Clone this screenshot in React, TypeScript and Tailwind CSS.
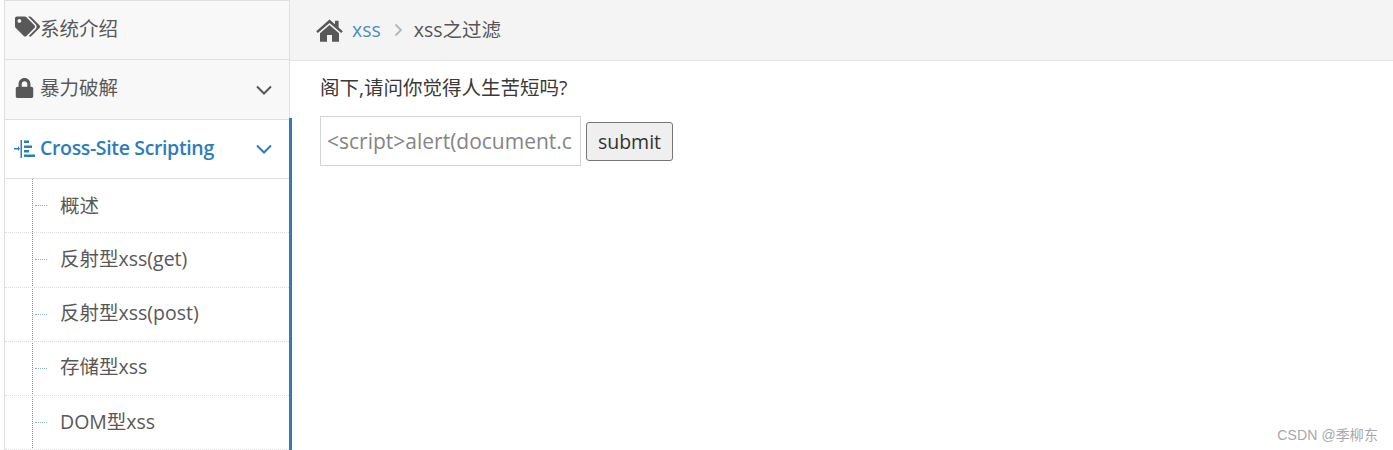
import React from "react";
import { FaTags, FaLock } from "react-icons/fa";

const font = "font-['Open_Sans','Noto_Sans_CJK_SC',sans-serif]";

function Chevron({ color }: { color: string }) {
  return (
    <svg width="18" height="12" viewBox="0 0 18 12" fill="none" className="shrink-0">
      <path d="M2 2.5 L9 9.5 L16 2.5" stroke={color} strokeWidth="2" />
    </svg>
  );
}

function HomeIcon() {
  return (
    <svg width="27" height="23" viewBox="0 0 27 23" className="shrink-0" fill="#585858">
      <path d="M0.2 12.2 L13.5 0.6 L19 5.2 L19 1.8 L22.6 1.8 L22.6 8.4 L26.8 12.2 L25.2 14 L13.5 4 L1.8 14 Z" />
      <path d="M4 14.2 L13.5 6 L23 14.2 L23 22.8 L16 22.8 L16 16 L11 16 L11 22.8 L4 22.8 Z" />
    </svg>
  );
}

function TreeIcon() {
  return (
    <svg width="22" height="18" viewBox="0 0 22 18" fill="#2b7dbc" className="shrink-0">
      <rect x="0" y="8" width="4" height="1.5" />
      <path d="M4 6 L6 8.7 L4 11 Z" />
      <rect x="6.5" y="0" width="1.5" height="18" />
      <rect x="10" y="0.5" width="5" height="2.5" />
      <rect x="10" y="5.5" width="8" height="2.5" />
      <rect x="10" y="10" width="5" height="2.5" />
      <rect x="10" y="14.5" width="11" height="2.5" />
    </svg>
  );
}

const subs = ["概述", "反射型xss(get)", "反射型xss(post)", "存储型xss", "DOM型xss"];
const heights = ["h-[54px]", "h-[55px]", "h-[54px]", "h-[54px]", "h-[54px]"];
const offsets = ["", "-mt-[3px]", "-mt-[3px]", "-mt-[3px]", "-mt-[1px]"];

export default function App() {
  return (
    <div className={`${font} flex h-[450px] w-[1393px] overflow-hidden bg-white text-[19.5px] text-[#585858] relative`}>
      <aside className="ml-1 w-[286px] shrink-0 flex flex-col">
        <div className="w-[286px] h-[60px] border border-[#e0e0e0] bg-[#f8f8f8] flex items-center pl-[10px] pb-[3px]">
          <FaTags className="w-[25px] h-[21px] text-[#585858] shrink-0 -mt-1" />
          <span>系统介绍</span>
        </div>
        <div className="w-[286px] h-[60px] border-x border-b border-[#e0e0e0] bg-[#f8f8f8] flex items-center pl-[11px] pr-[16px]">
          <FaLock className="w-[19px] h-[20px] text-[#585858] shrink-0 -mt-1 -ml-px" />
          <span className="ml-[6px] flex-1 -mt-[4px]">暴力破解</span>
          <Chevron color="#585858" />
        </div>
        <div className="w-[288px] relative z-10 border-r-[3px] border-[#2f7cb8] flex-1 flex flex-col -mt-[2px] pt-[2px]">
          <div className="h-[59px] border-l border-b border-[#e0e0e0] flex items-center pl-[9px] pr-[16px] text-[#2b7dbc] font-semibold bg-white">
            <TreeIcon />
            <span className="ml-[4px] flex-1 whitespace-nowrap tracking-[-0.35px] -mt-[2px]">Cross-Site Scripting</span>
            <Chevron color="#2b7dbc" />
          </div>
          <ul className="border-l border-[#e0e0e0] flex-1 relative">
            <li className="absolute left-[27px] top-0 bottom-0 border-l border-dotted border-[#5b9bd1]" aria-hidden />
            {subs.map((s, i) => (
              <li key={s} className={`${heights[i]} border-b border-dotted border-[#dcdcdc] flex items-center pl-[55px] relative`}>
                <span className="absolute left-[30px] top-[26px] w-[12px] border-t border-dotted border-[#8ab0cc]" />
                <span className={`whitespace-nowrap ${offsets[i]}`}>{s}</span>
              </li>
            ))}
          </ul>
        </div>
      </aside>
      <main className="flex-1 flex flex-col">
        <div className="h-[61px] bg-[#f4f4f4] border-b border-[#e5e5e5] flex items-center pl-[26px] shrink-0">
          <HomeIcon />
          <a className="ml-[9px] text-[#4c8fbd] -mt-[1px]">xss</a>
          <svg width="10" height="14" viewBox="0 0 10 14" fill="none" className="ml-[13px] mr-[10px]">
            <path d="M1.5 1.5 L7 7 L1.5 12.5" stroke="#b2b6bf" strokeWidth="1.8" />
          </svg>
          <span className="text-[#555] -mt-[1px]">xss之过滤</span>
        </div>
        <div className="pl-[30px] flex flex-col">
          <p className="mt-[12px] text-[#393939] leading-[30px]">阁下,请问你觉得人生苦短吗?</p>
          <form className="mt-[13px] flex items-center">
            <input
              readOnly
              placeholder="<script>alert(document.cookie)</script>"
              className="w-[261px] h-[50px] border border-[#d5d5d5] pl-[6px] pr-[7px] text-[21px] text-[#858585] placeholder:text-[#858585] bg-white outline-none"
            />
            <button type="button" className="ml-[5px] w-[87px] h-[39px] border border-[#767676] rounded-[3px] bg-[#efefef] text-[#333] text-[19.5px] pt-[2px]">submit</button>
          </form>
        </div>
      </main>
      <span className="absolute right-[15px] bottom-[6px] text-[14px] tracking-[0.1px] leading-[18px] text-[#a8a8a8] font-['Liberation_Sans','Noto_Sans_CJK_SC',sans-serif]">CSDN @季柳东</span>
    </div>
  );
}
